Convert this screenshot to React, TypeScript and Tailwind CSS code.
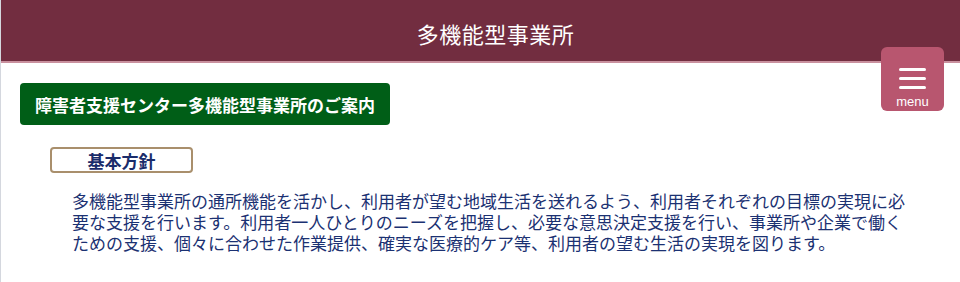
import { useState } from "react";

const jp = "font-['Noto_Sans_CJK_JP','Noto_Sans',sans-serif]";

export default function App() {
  const [open, setOpen] = useState(false);

  return (
    <div className={`relative min-h-[282px] bg-white border-l border-[#d4d7de] ${jp}`}>
      <header className="bg-[#722d40] border-b-2 border-[#c9909e] h-[63px] flex items-center justify-center pl-[30px] pt-[4px]">
        <h1 className="text-white text-[22px] leading-none tracking-[0.5px]">多機能型事業所</h1>
      </header>

      <button
        onClick={() => setOpen(!open)}
        className="absolute top-[47px] right-[16px] w-[63px] h-[64px] rounded-[6px] bg-[#b8566f] flex flex-col items-center pt-[21px]"
      >
        <span className="block w-[27px] h-[3px] rounded-full bg-white" />
        <span className="block w-[27px] h-[3px] rounded-full bg-white mt-[6px]" />
        <span className="block w-[27px] h-[3px] rounded-full bg-white mt-[6px]" />
        <span className="text-white text-[13px] leading-none mt-[6px] font-['Liberation_Sans',sans-serif]">menu</span>
      </button>

      <main className="pl-[19px] pt-[20px]">
        <h2 className="inline-flex items-center h-[42px] px-[15px] rounded-[4px] bg-[#005e17] text-white text-[17px] font-bold leading-none">
          障害者支援センター多機能型事業所のご案内
        </h2>

        <section className="pl-[30px] pt-[22px]">
          <h3 className="w-[143px] h-[26px] flex items-center justify-center rounded-[4px] border-2 border-[#a98f6c] text-[#1a2c6b] text-[17px] font-bold leading-none">
            基本方針
          </h3>
          <p className="w-[845px] ml-[22px] mt-[17px] text-[#1b3172] text-[17px] leading-[21px]">
            多機能型事業所の通所機能を活かし、利用者が望む地域生活を送れるよう、利用者それぞれの目標の実現に必要な支援を行います。利用者一人ひとりのニーズを把握し、必要な意思決定支援を行い、事業所や企業で働くための支援、個々に合わせた作業提供、確実な医療的ケア等、利用者の望む生活の実現を図ります。
          </p>
        </section>
      </main>
    </div>
  );
}
